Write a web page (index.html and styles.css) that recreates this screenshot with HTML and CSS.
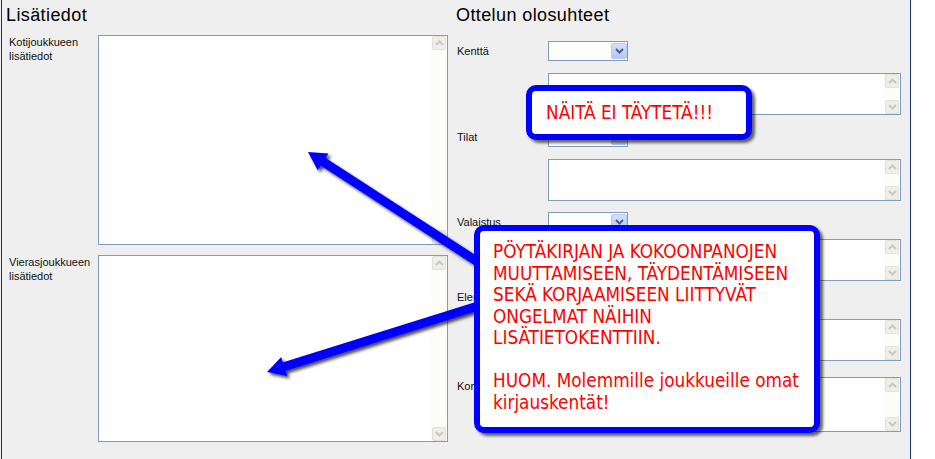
FILE: index.html
```html
<!DOCTYPE html>
<html lang="fi">
<head>
<meta charset="utf-8">
<title>Lisätiedot</title>
<link rel="stylesheet" href="styles.css">
</head>
<body>
<div class="page">
  <div class="panel">
    <section class="col col-left">
      <h2 class="title">Lisätiedot</h2>
      <div class="grid-left">
        <div class="label">Kotijoukkueen<br>lisätiedot</div>
        <div class="ta ta-home">
          <div class="sb"><span class="sbtn"><svg width="9" height="6" viewBox="0 0 9 6"><polyline points="1,5 4.5,1.5 8,5" /></svg></span><span class="sbtn"><svg width="9" height="6" viewBox="0 0 9 6"><polyline points="1,1 4.5,4.5 8,1" /></svg></span></div>
        </div>
        <div class="label">Vierasjoukkueen<br>lisätiedot</div>
        <div class="ta ta-away">
          <div class="sb"><span class="sbtn"><svg width="9" height="6" viewBox="0 0 9 6"><polyline points="1,5 4.5,1.5 8,5" /></svg></span><span class="sbtn"><svg width="9" height="6" viewBox="0 0 9 6"><polyline points="1,1 4.5,4.5 8,1" /></svg></span></div>
        </div>
      </div>
    </section>

    <section class="col col-right">
      <h2 class="title">Ottelun olosuhteet</h2>

      <div class="row row-kentta">
        <div class="label">Kenttä</div>
        <div class="select"><span class="dd"><svg width="9" height="6" viewBox="0 0 9 6"><polyline points="1,1 4.5,4.5 8,1" /></svg></span></div>
      </div>
      <div class="ta ta-side mt12">
        <div class="sb"><span class="sbtn"><svg width="9" height="6" viewBox="0 0 9 6"><polyline points="1,5 4.5,1.5 8,5" /></svg></span><span class="sbtn"><svg width="9" height="6" viewBox="0 0 9 6"><polyline points="1,1 4.5,4.5 8,1" /></svg></span></div>
      </div>

      <div class="row mt12">
        <div class="label">Tilat</div>
        <div class="select"><span class="dd"><svg width="9" height="6" viewBox="0 0 9 6"><polyline points="1,1 4.5,4.5 8,1" /></svg></span></div>
      </div>
      <div class="ta ta-side mt12">
        <div class="sb"><span class="sbtn"><svg width="9" height="6" viewBox="0 0 9 6"><polyline points="1,5 4.5,1.5 8,5" /></svg></span><span class="sbtn"><svg width="9" height="6" viewBox="0 0 9 6"><polyline points="1,1 4.5,4.5 8,1" /></svg></span></div>
      </div>

      <div class="row mt11">
        <div class="label">Valaistus</div>
        <div class="select"><span class="dd"><svg width="9" height="6" viewBox="0 0 9 6"><polyline points="1,1 4.5,4.5 8,1" /></svg></span></div>
      </div>
      <div class="ta ta-side mt7">
        <div class="sb"><span class="sbtn"><svg width="9" height="6" viewBox="0 0 9 6"><polyline points="1,5 4.5,1.5 8,5" /></svg></span><span class="sbtn"><svg width="9" height="6" viewBox="0 0 9 6"><polyline points="1,1 4.5,4.5 8,1" /></svg></span></div>
      </div>

      <div class="row mt6">
        <div class="label">Eleryhmä</div>
        <div class="select"><span class="dd"><svg width="9" height="6" viewBox="0 0 9 6"><polyline points="1,1 4.5,4.5 8,1" /></svg></span></div>
      </div>
      <div class="ta ta-side mt12">
        <div class="sb"><span class="sbtn"><svg width="9" height="6" viewBox="0 0 9 6"><polyline points="1,5 4.5,1.5 8,5" /></svg></span><span class="sbtn"><svg width="9" height="6" viewBox="0 0 9 6"><polyline points="1,1 4.5,4.5 8,1" /></svg></span></div>
      </div>

      <div class="row row-top mt16">
        <div class="label">Kommentit</div>
        <div class="ta ta-last">
          <div class="sb"><span class="sbtn"><svg width="9" height="6" viewBox="0 0 9 6"><polyline points="1,5 4.5,1.5 8,5" /></svg></span><span class="sbtn"><svg width="9" height="6" viewBox="0 0 9 6"><polyline points="1,1 4.5,4.5 8,1" /></svg></span></div>
        </div>
      </div>
    </section>
  </div>
  <div class="outside"></div>

  <svg class="arrows" width="935" height="459" viewBox="0 0 935 459">
    <defs>
      <filter id="sh" x="-10%" y="-10%" width="130%" height="130%">
        <feDropShadow dx="2.5" dy="2.5" stdDeviation="1.5" flood-color="#000" flood-opacity="0.7"/>
      </filter>
    </defs>
    <g filter="url(#sh)" fill="#0000ff">
      <line x1="481" y1="264" x2="322" y2="161" stroke="#0000ff" stroke-width="9"/>
      <polygon points="308,152 328.5,153.4 317.7,170.2"/>
      <line x1="481" y1="305" x2="283" y2="367" stroke="#0000ff" stroke-width="9"/>
      <polygon points="267,372 281.2,357.1 287.2,376.1"/>
    </g>
  </svg>

  <div class="callout callout-small">NÄITÄ EI TÄYTETÄ!!!</div>
  <div class="callout callout-big">PÖYTÄKIRJAN JA KOKOONPANOJEN<br>MUUTTAMISEEN, TÄYDENTÄMISEEN<br>SEKÄ KORJAAMISEEN LIITTYVÄT<br>ONGELMAT NÄIHIN<br>LISÄTIETOKENTTIIN.<br><br>HUOM. Molemmille joukkueille omat<br>kirjauskentät!</div>
</div>
</body>
</html>
```

FILE: styles.css
```css
html, body {
  margin: 0;
  padding: 0;
}
body {
  background: #efefef;
  font-family: "Liberation Sans", Arial, sans-serif;
  color: #000;
  overflow: hidden;
}
.page {
  position: relative;
  width: 935px;
  height: 459px;
  display: flex;
  overflow: hidden;
}
.panel {
  margin-left: 1px;
  width: 908px;
  height: 459px;
  border-left: 1px solid #1c3370;
  border-right: 1px solid #1c3370;
  background: #efefef;
  display: flex;
}
.outside {
  flex: 1;
  background: #ffffff;
}
.col-left {
  width: 446px;
}
.col-right {
  margin-left: 8px;
  width: 445px;
  display: flex;
  flex-direction: column;
}
.title {
  margin: 0;
  padding-top: 4px;
  padding-left: 4px;
  font-size: 18px;
  line-height: 22px;
  font-weight: normal;
  letter-spacing: 0.4px;
}
.col-right .title {
  padding-left: 0;
}
.grid-left {
  margin-top: 9px;
  display: grid;
  grid-template-columns: 96px 350px;
  grid-template-rows: 210px 187px;
  row-gap: 10px;
}
.label {
  font-size: 11px;
  line-height: 14px;
  color: #111;
}
.grid-left .label {
  padding-left: 7px;
}
.ta {
  box-sizing: border-box;
  border: 1px solid #7f9db9;
  background: #ffffff;
  display: flex;
  justify-content: flex-end;
}
.sb {
  width: 16px;
  background: #fcfcf9;
  display: flex;
  flex-direction: column;
  justify-content: space-between;
}
.sbtn {
  box-sizing: border-box;
  width: 14px;
  height: 14px;
  margin-left: 1px;
  border: 1px solid #e2e1d9;
  border-radius: 2px;
  background: #efeee8;
  display: flex;
  align-items: center;
  justify-content: center;
}
.sbtn svg polyline {
  fill: none;
  stroke: #c9c8bd;
  stroke-width: 2;
}
.row {
  display: flex;
  align-items: center;
}
.row-kentta {
  margin-top: 15px;
}
.row-top {
  align-items: flex-start;
}
.row .label {
  width: 92px;
  flex: none;
  padding-left: 1px;
  box-sizing: border-box;
}
.row-top .label {
  padding-top: 2px;
}
.select {
  box-sizing: border-box;
  width: 80px;
  height: 20px;
  border: 1px solid #7f9db9;
  background: #fff;
  display: flex;
  justify-content: flex-end;
  padding: 1px 0 1px 0;
}
.dd {
  box-sizing: border-box;
  width: 16px;
  height: 16px;
  border: 1px solid #b6c9f2;
  border-radius: 2px;
  background: linear-gradient(#d4e1fd, #b4c8f6);
  display: flex;
  align-items: center;
  justify-content: center;
}
.dd svg polyline {
  fill: none;
  stroke: #4d6185;
  stroke-width: 2;
}
.ta-home {
  height: 210px;
}
.ta-away {
  height: 187px;
}
.ta-side {
  margin-left: 92px;
  width: 353px;
  height: 42px;
}
.ta-last {
  width: 353px;
  height: 55px;
}
.mt6 { margin-top: 6px; }
.mt7 { margin-top: 7px; }
.mt11 { margin-top: 11px; }
.mt12 { margin-top: 12px; }
.mt16 { margin-top: 16px; }

.arrows {
  position: absolute;
  left: 0;
  top: 0;
  pointer-events: none;
}
.callout {
  position: absolute;
  box-sizing: border-box;
  background: #ffffff;
  border: 6px solid #0000ff;
  border-radius: 10px;
  box-shadow: 3px 3px 3px rgba(0, 0, 0, 0.6);
  color: #ff0000;
  font-family: "DejaVu Sans Condensed", "DejaVu Sans", sans-serif;
  font-size: 18.8px;
  white-space: nowrap;
}
.callout-small {
  left: 526px;
  top: 85px;
  width: 226px;
  height: 55px;
  padding-left: 14px;
  display: flex;
  align-items: center;
}
.callout-big {
  left: 474px;
  top: 225px;
  width: 346px;
  height: 208px;
  padding: 10px 13px;
  line-height: 21.5px;
}
```
